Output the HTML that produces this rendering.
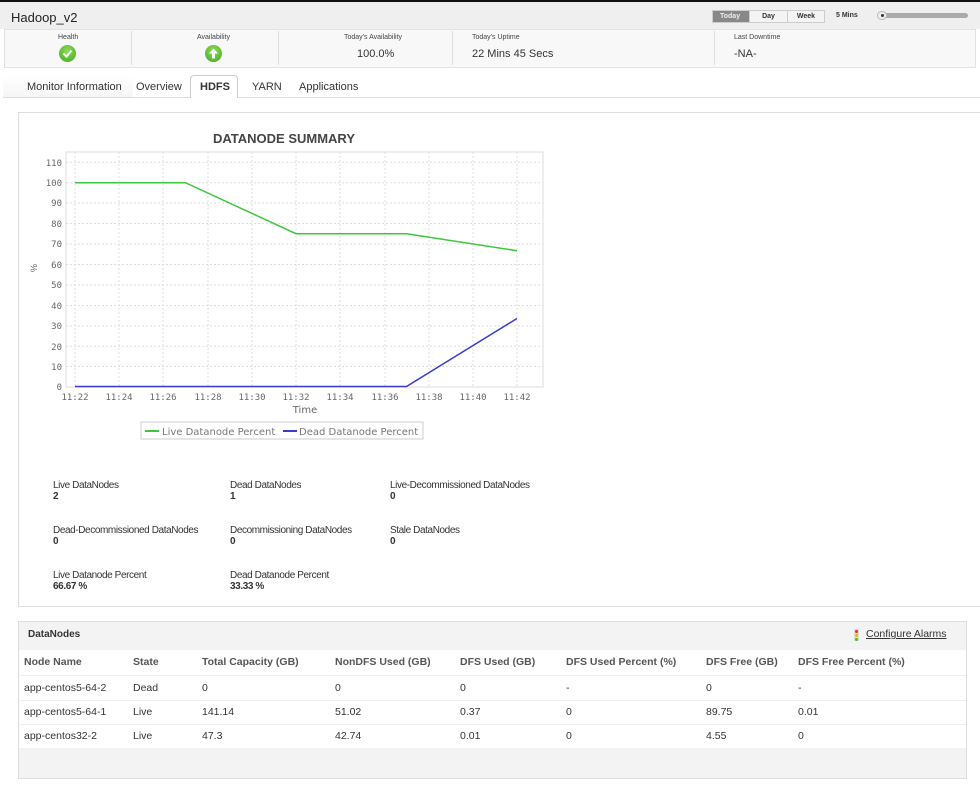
<!DOCTYPE html>
<html><head><meta charset="utf-8"><style>
*{margin:0;padding:0;box-sizing:border-box}
body{width:980px;height:791px;background:#fff;font-family:"Liberation Sans",Arial,sans-serif;color:#333;position:relative;overflow:hidden}
.abs{position:absolute}
.top{left:0;top:0;width:980px;height:2px;background:#111}
.title{left:0;top:2px;width:980px;height:27px;background:#efefef}
.stats{left:4px;top:29px;width:972px;height:39px;background:#f8f8f8;border:1px solid #e2e2e2}
.lbl{font-size:7px;color:#444}
.val{font-size:11px;color:#333}
.div{width:1px;background:#ddd;top:31px;height:34px}
.btns{left:712px;top:10px;height:13px;border:1px solid #ccc;display:flex;font-size:7px;font-weight:bold}
.btns div{padding:0 7px;line-height:11px;border-right:1px solid #ccc;background:#f4f4f4;color:#333}
.tab{top:78px;font-size:11px;color:#333}
td,th{text-align:left}
</style></head><body>
<div class="abs top"></div>
<div class="abs title"></div>
<div class="abs" style="left:11px;top:10px;font-size:13px;color:#222">Hadoop_v2</div>
<div class="abs btns"><div style="background:#888;color:#eee;width:37px">Today</div><div style="width:19px;padding:0;width:38px;text-align:center">Day</div><div style="width:36px;border:none;padding:0;text-align:center">Week</div></div>
<div class="abs" style="left:836px;top:12px;font-size:7px;font-weight:bold">5 Mins</div>
<div class="abs" style="left:878px;top:13px;width:90px;height:5px;background:#aaa;border-radius:3px"></div>
<div class="abs" style="left:877px;top:11px;width:10px;height:9px;background:#eee;border:1px solid #bbb;border-radius:5px"></div>
<div class="abs" style="left:881px;top:14px;width:3px;height:3px;background:#333;border-radius:2px"></div>
<div class="abs stats"></div>
<div class="abs div" style="left:131px"></div><div class="abs div" style="left:278px"></div><div class="abs div" style="left:452px"></div><div class="abs div" style="left:714px"></div>
<div class="abs lbl" style="left:58px;top:34px">Health</div>
<div class="abs" style="left:59px;top:45px;width:17px;height:17px;border-radius:50%;background:radial-gradient(circle at 50% 35%,#8fdc5a,#3fa81c)"><svg width="17" height="17"><path d="M4.5 8.5l3 3 5-6" stroke="#fff" stroke-width="2" fill="none"/></svg></div>
<div class="abs lbl" style="left:197px;top:34px">Availability</div>
<div class="abs" style="left:205px;top:45px;width:17px;height:17px;border-radius:50%;background:radial-gradient(circle at 50% 35%,#8fdc5a,#3fa81c)"><svg width="17" height="17"><path d="M8.5 3.5l4.5 5h-3v5h-3v-5h-3z" fill="#fff"/></svg></div>
<div class="abs lbl" style="left:344px;top:34px">Today's Availability</div>
<div class="abs val" style="left:357px;top:48px">100.0%</div>
<div class="abs lbl" style="left:472px;top:34px">Today's Uptime</div>
<div class="abs val" style="left:472px;top:48px">22 Mins 45 Secs</div>
<div class="abs lbl" style="left:734px;top:34px">Last Downtime</div>
<div class="abs val" style="left:734px;top:48px">-NA-</div>
<div class="abs" style="left:3px;top:97px;width:977px;height:1px;background:#ddd"></div>
<div class="abs" style="left:3px;top:75px;width:130px;height:22px;background:linear-gradient(#fff,#f6f6f6)"></div>
<div class="abs" style="left:190px;top:75px;width:48px;height:23px;background:#fff;border:1px solid #ccc;border-bottom:none;border-radius:4px 4px 0 0"></div>
<div class="abs tab" style="left:27px;top:81px">Monitor Information</div>
<div class="abs tab" style="left:136px;top:81px">Overview</div>
<div class="abs tab" style="left:200px;top:81px;font-weight:bold">HDFS</div>
<div class="abs tab" style="left:252px;top:81px">YARN</div>
<div class="abs tab" style="left:299px;top:81px">Applications</div>
<div class="abs" style="left:18px;top:112px;width:970px;height:495px;border:1px solid #ddd"></div>
<svg class="abs" style="left:0;top:0" width="560" height="450">
<text x="284" y="143" font-size="13" font-weight="bold" fill="#444" text-anchor="middle" font-family="Liberation Sans,sans-serif">DATANODE SUMMARY</text>
<rect x="66" y="152" width="477" height="235" fill="#fff" stroke="#ddd"/>
<g stroke="#ddd" stroke-dasharray="2,2">
<path d="M66 162.3H543M66 182.7H543M66 203H543M66 223.5H543M66 244H543M66 264.5H543M66 285H543M66 305.5H543M66 326H543M66 346.3H543M66 366.5H543"/>
<path d="M75 152V387M119 152V387M163 152V387M208 152V387M252 152V387M296 152V387M340 152V387M385 152V387M429 152V387M473 152V387M517 152V387"/>
</g>
<g font-family="DejaVu Sans Mono,monospace" font-size="9" fill="#666" text-anchor="end">
<text x="62" y="166">110</text><text x="62" y="186">100</text><text x="62" y="206">90</text><text x="62" y="227">80</text><text x="62" y="247">70</text><text x="62" y="268">60</text><text x="62" y="288">50</text><text x="62" y="309">40</text><text x="62" y="329">30</text><text x="62" y="350">20</text><text x="62" y="370">10</text><text x="62" y="390">0</text>
</g>
<g font-family="DejaVu Sans Mono,monospace" font-size="9" fill="#666" text-anchor="middle">
<text x="75" y="400">11:22</text><text x="119" y="400">11:24</text><text x="163" y="400">11:26</text><text x="208" y="400">11:28</text><text x="252" y="400">11:30</text><text x="296" y="400">11:32</text><text x="340" y="400">11:34</text><text x="385" y="400">11:36</text><text x="429" y="400">11:38</text><text x="473" y="400">11:40</text><text x="517" y="400">11:42</text>
</g>
<text x="305" y="413" font-size="10" fill="#666" text-anchor="middle" font-family="DejaVu Sans,sans-serif">Time</text>
<text x="0" y="0" font-size="9" fill="#666" transform="translate(37,268) rotate(-90)" text-anchor="middle">%</text>
<polyline points="75,182.7 185.5,182.7 296,233.7 406.5,233.7 517,250.7" fill="none" stroke="#3ec63e" stroke-width="1.5"/>
<polyline points="75,386.5 406.5,386.5 517,318.5" fill="none" stroke="#3a3acf" stroke-width="1.5"/>
<rect x="141" y="422" width="282" height="17" fill="#fff" stroke="#ccc"/>
<path d="M145 431h14" stroke="#3ec63e" stroke-width="2"/><path d="M283 431h14" stroke="#3a3acf" stroke-width="2"/>
<g font-family="DejaVu Sans,sans-serif" font-size="10" fill="#777"><text x="162" y="435">Live Datanode Percent</text><text x="299" y="435">Dead Datanode Percent</text></g>
</svg>
<div class="abs" style="font-size:10px;letter-spacing:-0.4px;color:#333">
<div class="abs" style="left:53px;top:480px;white-space:nowrap">Live DataNodes<br><b>2</b></div>
<div class="abs" style="left:230px;top:480px;white-space:nowrap">Dead DataNodes<br><b>1</b></div>
<div class="abs" style="left:390px;top:480px;white-space:nowrap">Live-Decommissioned DataNodes<br><b>0</b></div>
<div class="abs" style="left:53px;top:525px;white-space:nowrap">Dead-Decommissioned DataNodes<br><b>0</b></div>
<div class="abs" style="left:230px;top:525px;white-space:nowrap">Decommissioning DataNodes<br><b>0</b></div>
<div class="abs" style="left:390px;top:525px;white-space:nowrap">Stale DataNodes<br><b>0</b></div>
<div class="abs" style="left:53px;top:570px;white-space:nowrap">Live Datanode Percent<br><b>66.67 %</b></div>
<div class="abs" style="left:230px;top:570px;white-space:nowrap">Dead Datanode Percent<br><b>33.33 %</b></div>
</div>
<div class="abs" style="left:18px;top:621px;width:949px;height:158px;border:1px solid #ddd;background:#f3f3f3"></div>
<div class="abs" style="left:28px;top:629px;font-size:10px;font-weight:bold;color:#333">DataNodes</div>
<div class="abs" style="left:854px;top:629px;width:5px;height:12px;background:#ddd"><div style="width:3px;height:3px;margin:1px;background:#d33;border-radius:2px"></div><div style="width:3px;height:3px;margin:1px;background:#eb0;border-radius:2px"></div><div style="width:3px;height:3px;margin:1px;background:#4b4;border-radius:2px"></div></div>
<div class="abs" style="left:866px;top:628px;font-size:10.5px;color:#333;text-decoration:underline">Configure Alarms</div>
<table class="abs" style="left:19px;top:650px;width:947px;border-collapse:collapse;font-size:10.5px;background:#fff;color:#333">
<tr style="height:25px;font-weight:bold;color:#555"><th style="padding-left:5px;width:114px">Node Name</th><th style="width:69px">State</th><th style="width:133px">Total Capacity (GB)</th><th style="width:125px">NonDFS Used (GB)</th><th style="width:106px">DFS Used (GB)</th><th style="width:140px">DFS Used Percent (%)</th><th style="width:92px">DFS Free (GB)</th><th>DFS Free Percent (%)</th></tr>
<tr style="height:25px;border-top:1px solid #eee"><td style="padding-left:5px">app-centos5-64-2</td><td>Dead</td><td>0</td><td>0</td><td>0</td><td>-</td><td>0</td><td>-</td></tr>
<tr style="height:24px;border-top:1px solid #eee"><td style="padding-left:5px">app-centos5-64-1</td><td>Live</td><td>141.14</td><td>51.02</td><td>0.37</td><td>0</td><td>89.75</td><td>0.01</td></tr>
<tr style="height:24px;border-top:1px solid #eee"><td style="padding-left:5px">app-centos32-2</td><td>Live</td><td>47.3</td><td>42.74</td><td>0.01</td><td>0</td><td>4.55</td><td>0</td></tr>
</table>
</body></html>
